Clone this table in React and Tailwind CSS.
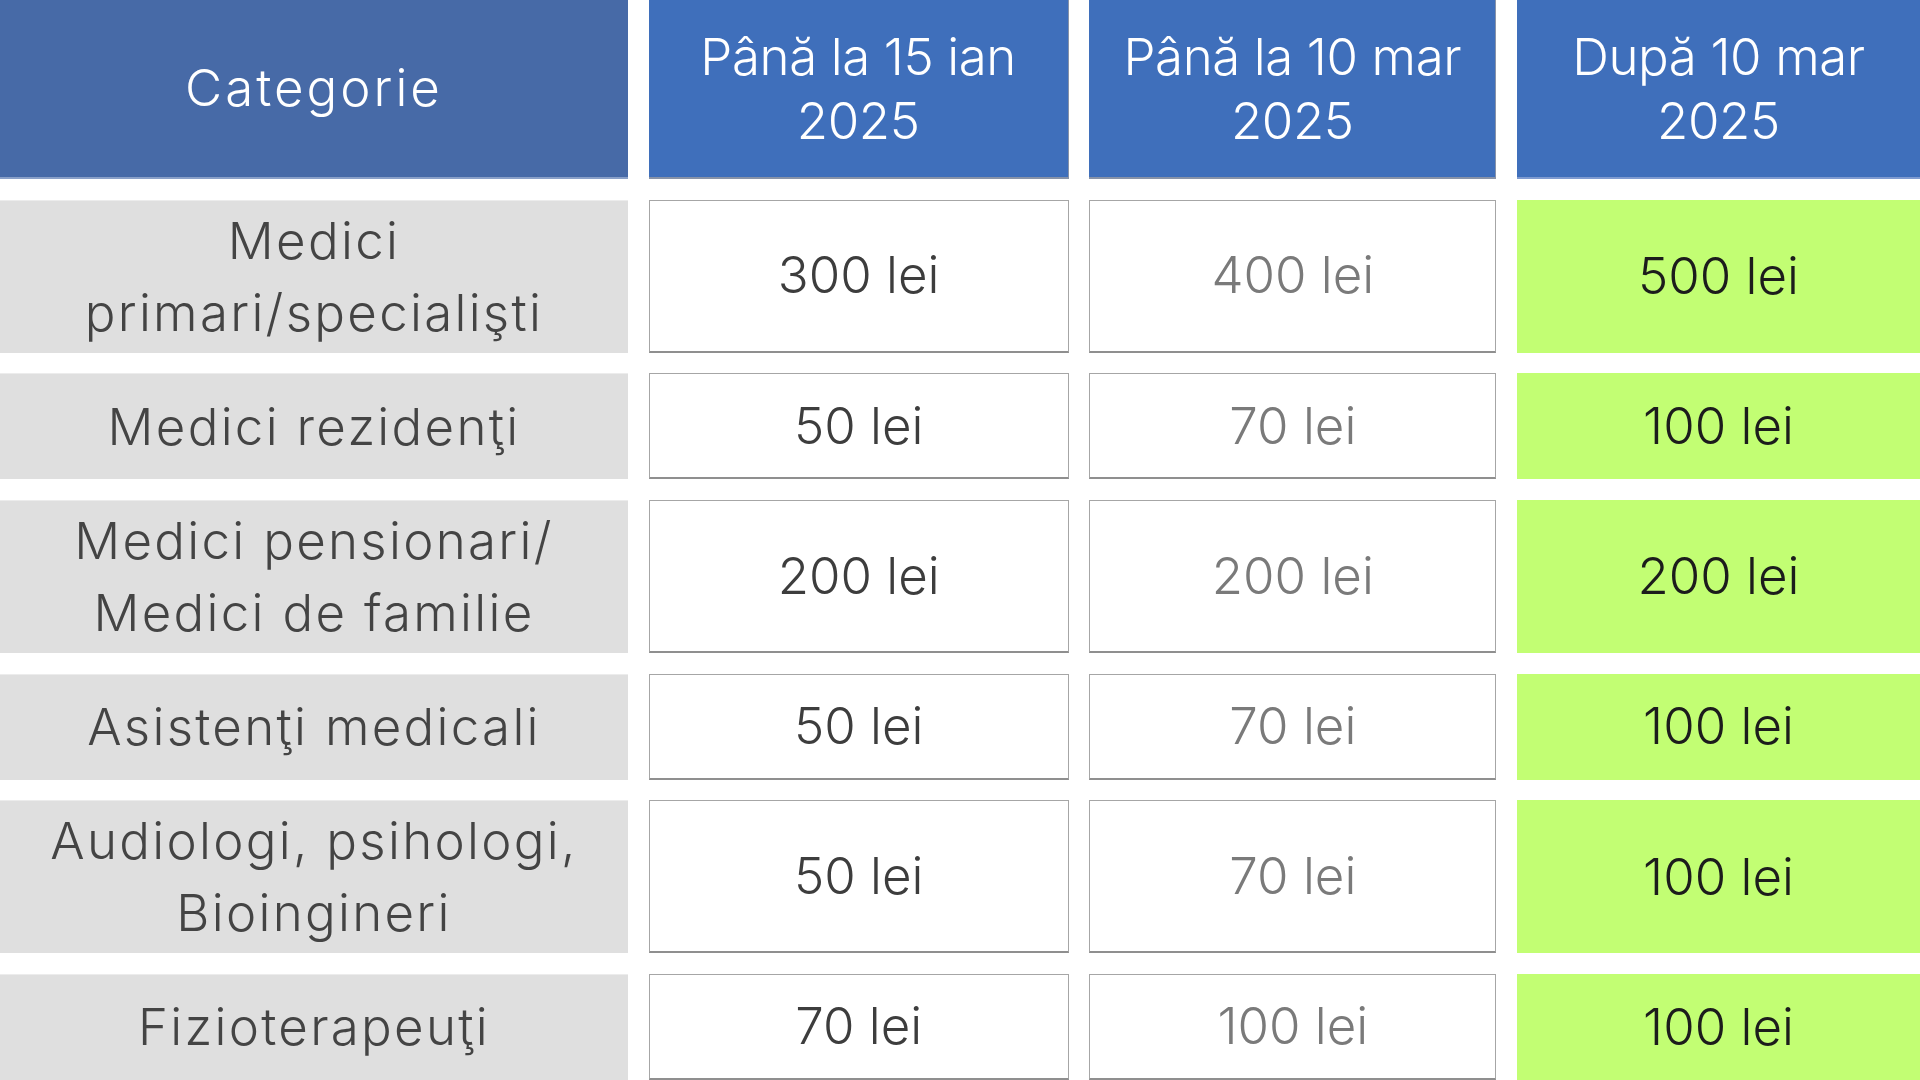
export default function App() {
  const rows = [
    { cat: ["Medici", "primari/specialişti"], a: "300 lei", b: "400 lei", c: "500 lei" },
    { cat: ["Medici rezidenţi"], a: "50 lei", b: "70 lei", c: "100 lei" },
    { cat: ["Medici pensionari/", "Medici de familie"], a: "200 lei", b: "200 lei", c: "200 lei" },
    { cat: ["Asistenţi medicali"], a: "50 lei", b: "70 lei", c: "100 lei" },
    { cat: ["Audiologi, psihologi,", "Bioingineri"], a: "50 lei", b: "70 lei", c: "100 lei" },
    { cat: ["Fizioterapeuţi"], a: "70 lei", b: "100 lei", c: "100 lei" },
  ];
  const font = { fontFamily: "Inter, 'Noto Sans', sans-serif" };
  return (
    <div
      className="w-[1920px] h-[1080px] overflow-hidden bg-white grid grid-cols-[628px_420px_407px_403px] grid-rows-[179px_153px_106px_153px_106px_153px_106px] gap-x-[20.67px] gap-y-[20.67px] text-[51px] font-light"
      style={font}
    >
      <div className="bg-[#476aa7] border-b-2 border-b-[#8aa0c8] flex items-center justify-center text-white tracking-[3px]">
        Categorie
      </div>
      <div className="bg-[#3f6fbb] border-b-2 border-r border-[#8893a8] flex flex-col items-center justify-center text-white leading-[64px] text-center tracking-[-0.4px]">
        <span>Până la 15 ian</span>
        <span>2025</span>
      </div>
      <div className="bg-[#3f6fbb] border-b-2 border-r border-[#8893a8] flex flex-col items-center justify-center text-white leading-[64px] text-center tracking-[-0.4px]">
        <span>Până la 10 mar</span>
        <span>2025</span>
      </div>
      <div className="bg-[#3f6fbb] border-b-2 border-[#7f9bd0] flex flex-col items-center justify-center text-white leading-[64px] text-center tracking-[-0.4px]">
        <span>După 10 mar</span>
        <span>2025</span>
      </div>
      {rows.map((r, i) => (
        <Row key={i} r={r} />
      ))}
    </div>
  );
}

function Row({ r }) {
  return (
    <>
      <div className="bg-[#dfdfdf] border-t border-[#ececec] flex flex-col items-center justify-center text-[#444444] leading-[72px] text-center tracking-[2.3px]">
        {r.cat.map((l, j) => (
          <span key={j}>{l}</span>
        ))}
      </div>
      <div className="bg-white border border-[#a6a6a6] border-b-2 border-b-[#8f8f8f] flex items-center justify-center text-[#3d3d3d]">
        {r.a}
      </div>
      <div className="bg-white border border-[#a6a6a6] border-b-2 border-b-[#8f8f8f] flex items-center justify-center text-[#7a7a7a]">
        {r.b}
      </div>
      <div className="bg-[#c2fe73] flex items-center justify-center text-[#1c1c1c]">
        {r.c}
      </div>
    </>
  );
}
